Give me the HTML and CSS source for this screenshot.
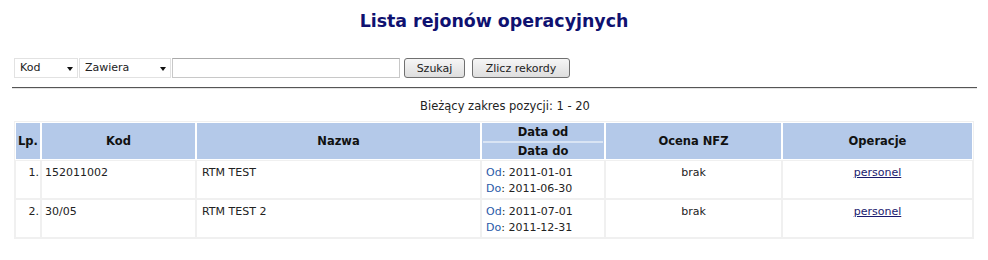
FILE: index.html
```html
<!DOCTYPE html>
<html lang="pl">
<head>
<meta charset="utf-8">
<title>Lista rejonów operacyjnych</title>
<link rel="stylesheet" href="styles.css">
</head>
<body>
<h1 class="title">Lista rejonów operacyjnych</h1>
<form class="search">
  <span class="sel sel-kod"><select><option>Kod</option></select></span>
  <span class="sel sel-op"><select><option>Zawiera</option></select></span>
  <input class="query" type="text">
  <button type="button" class="btn btn-szukaj">Szukaj</button>
  <button type="button" class="btn btn-zlicz">Zlicz rekordy</button>
</form>
<div class="rule"></div>
<p class="range">Bieżący zakres pozycji: 1 - 20</p>
<table class="grid">
  <colgroup>
    <col class="c-lp"><col class="c-kod"><col class="c-nazwa"><col class="c-data"><col class="c-ocena"><col class="c-op">
  </colgroup>
  <thead>
    <tr>
      <th>Lp.</th>
      <th>Kod</th>
      <th>Nazwa</th>
      <th class="th-data"><div class="d1">Data od</div><div class="d2">Data do</div></th>
      <th>Ocena NFZ</th>
      <th>Operacje</th>
    </tr>
  </thead>
  <tbody>
    <tr>
      <td class="lp">1.</td>
      <td>152011002</td>
      <td class="nazwa">RTM TEST</td>
      <td class="data"><div><span class="lbl">Od</span>: 2011-01-01</div><div><span class="lbl">Do</span>: 2011-06-30</div></td>
      <td class="center">brak</td>
      <td class="center"><a href="#">personel</a></td>
    </tr>
    <tr>
      <td class="lp">2.</td>
      <td>30/05</td>
      <td class="nazwa">RTM TEST 2</td>
      <td class="data"><div><span class="lbl">Od</span>: 2011-07-01</div><div><span class="lbl">Do</span>: 2011-12-31</div></td>
      <td class="center">brak</td>
      <td class="center"><a href="#">personel</a></td>
    </tr>
  </tbody>
</table>
</body>
</html>
```

FILE: styles.css
```css
html, body {
  margin: 0;
  padding: 0;
  background: #fff;
}
body {
  padding: 8px;
  font-family: Verdana, "DejaVu Sans", sans-serif;
  font-size: 11px;
  color: #222;
}
.title {
  margin: 2px 0 0;
  text-align: center;
  font-size: 17.4px;
  line-height: 22px;
  font-weight: bold;
  color: #0f1170;
}
.search {
  display: flex;
  align-items: center;
  margin: 25px 0 0 6px;
  height: 21px;
}
.sel {
  position: relative;
  display: block;
  height: 20px;
  margin-right: 1px;
}
.sel select {
  appearance: none;
  -webkit-appearance: none;
  height: 20px;
  margin: 0;
  padding: 0 0 0 5px;
  border: 1px solid #e2e2e2;
  border-radius: 0;
  background: #fff;
  font-family: inherit;
  font-size: 11px;
  color: #222;
}
.sel-kod select { width: 64px; }
.sel-op select { width: 92px; }
.sel::after {
  content: "";
  position: absolute;
  top: 9px;
  right: 5px;
  border-left: 3.5px solid transparent;
  border-right: 3.5px solid transparent;
  border-top: 4px solid #111;
  pointer-events: none;
}
.query {
  width: 228px;
  height: 20px;
  box-sizing: border-box;
  margin: 0;
  padding: 0 3px;
  border: 1px solid #c8c8c8;
  border-top-color: #aaa;
}
.btn {
  height: 20px;
  box-sizing: border-box;
  padding: 0 7px;
  margin: 1px 0 0;
  border: 1px solid #707070;
  border-radius: 3px;
  background: linear-gradient(#f6f6f6, #dedede);
  font-family: inherit;
  font-size: 11px;
  color: #222;
}
.btn-szukaj { width: 61px; margin-left: 4px; }
.btn-zlicz { width: 98px; margin-left: 7px; }
.rule {
  margin: 9px 3px 0 4px;
  border-top: 1px solid #555;
  border-bottom: 1px solid #e4e4e4;
}
.range {
  margin: 10px 0 0;
  padding-left: 22px;
  text-align: center;
  font-size: 11.5px;
  line-height: 15px;
}
.grid {
  margin: 7px auto 0;
  width: 960px;
  border-collapse: separate;
  border-spacing: 0;
  border: 1px solid #f0f0f0;
  table-layout: fixed;
}
.c-lp { width: 26px; }
.c-kod { width: 155px; }
.c-nazwa { width: 285px; }
.c-data { width: 124px; }
.c-ocena { width: 177px; }
.c-op { width: 191px; }
.grid th {
  background: #b4c9e9;
  border: 1px solid #fff;
  font-weight: bold;
  font-size: 11.5px;
  height: 36px;
  padding: 0;
  text-align: center;
  color: #111;
}
.grid th.th-data {
  line-height: 16px;
}
.th-data .d1 {
  margin: 0 1px;
  padding: 1px 0;
  border-bottom: 2px solid #d9e4f4;
}
.th-data .d2 {
  padding-top: 0;
}
.grid td {
  vertical-align: top;
  border: 1px solid #f0f0f0;
  padding: 4px 3px 1px;
  line-height: 16px;
}
.grid td.lp { text-align: right; padding-right: 1px; }
.grid td.data { padding-left: 4px; }
.grid td.nazwa { padding-left: 5px; }
.grid td.center { text-align: center; }
.lbl { color: #2a5aa8; }
.grid a {
  color: #1a1a6e;
  text-decoration: underline;
}
```
